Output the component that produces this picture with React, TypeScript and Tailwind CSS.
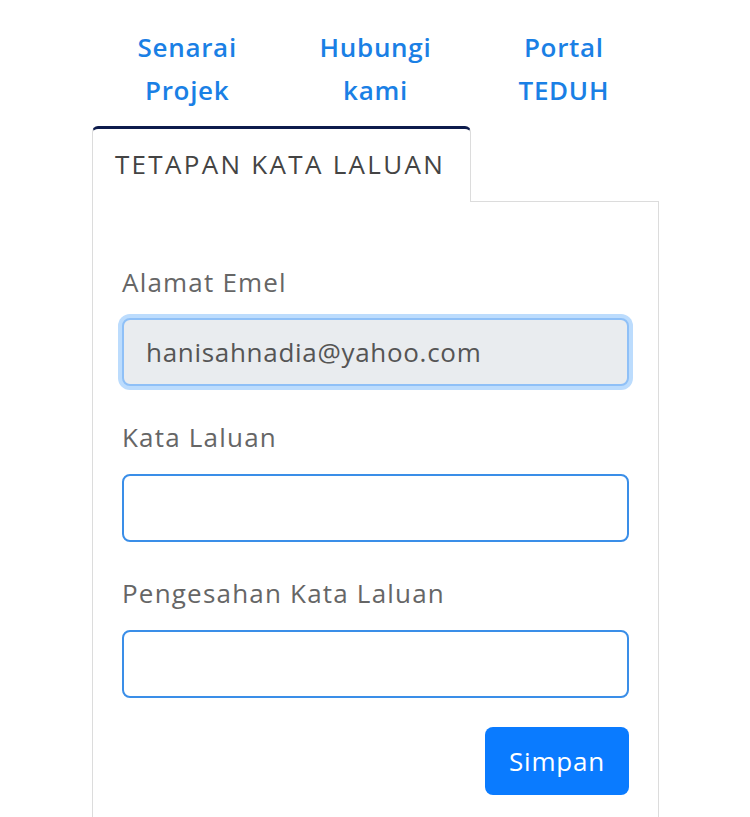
export default function App() {
  return (
    <div className="min-h-screen bg-white font-['Open_Sans',sans-serif] text-[26px]">
      {/* Nav links */}
      <ul className="ml-[93px] w-[565px] pt-[26px] flex text-center text-[#1a80e5] font-semibold leading-[43px] tracking-[0.7px]">
        <li className="flex-1">Senarai<br />Projek</li>
        <li className="flex-1">Hubungi<br />kami</li>
        <li className="flex-1">Portal<br />TEDUH</li>
      </ul>

      <div className="ml-[92px] w-[567px] mt-[14px]">
        {/* Tabs */}
        <div className="flex">
          <div className="border-t-[3px] border-t-[#0d1b4c] border-x border-x-[#dcdcdc] rounded-t-[6px] pl-[22px] pr-[25px] pt-[17px] pb-[20px] leading-[36px] text-[#444] tracking-[2.3px]">
            TETAPAN KATA LALUAN
          </div>
          <div className="flex-1 border-b border-[#dcdcdc]" />
        </div>

        {/* Card */}
        <div className="border-x border-[#dcdcdc] px-[29px] pt-[62px] pb-[40px] leading-[36px]">
          <label className="block text-[#666] mb-[18px] tracking-[1.2px]">Alamat Emel</label>
          <div className="h-[68px] rounded-[8px] border-2 border-[#8fc0f7] bg-[#e9ecef] ring-4 ring-[#bcdcfd] flex items-center px-[22px] text-[#555] tracking-[0.7px]">
            hanisahnadia@yahoo.com
          </div>

          <label className="block text-[#666] mt-[33px] mb-[19px] tracking-[1.2px]">Kata Laluan</label>
          <div className="h-[68px] rounded-[8px] border-2 border-[#3a8ee8] bg-white" />

          <label className="block text-[#666] mt-[33px] mb-[19px] tracking-[1.2px]">Pengesahan Kata Laluan</label>
          <div className="h-[68px] rounded-[8px] border-2 border-[#3a8ee8] bg-white" />

          <div className="flex justify-end mt-[29px]">
            <button className="h-[68px] w-[144px] rounded-[8px] bg-[#0a7bff] text-white tracking-[0.8px]">Simpan</button>
          </div>
        </div>
      </div>
    </div>
  );
}
